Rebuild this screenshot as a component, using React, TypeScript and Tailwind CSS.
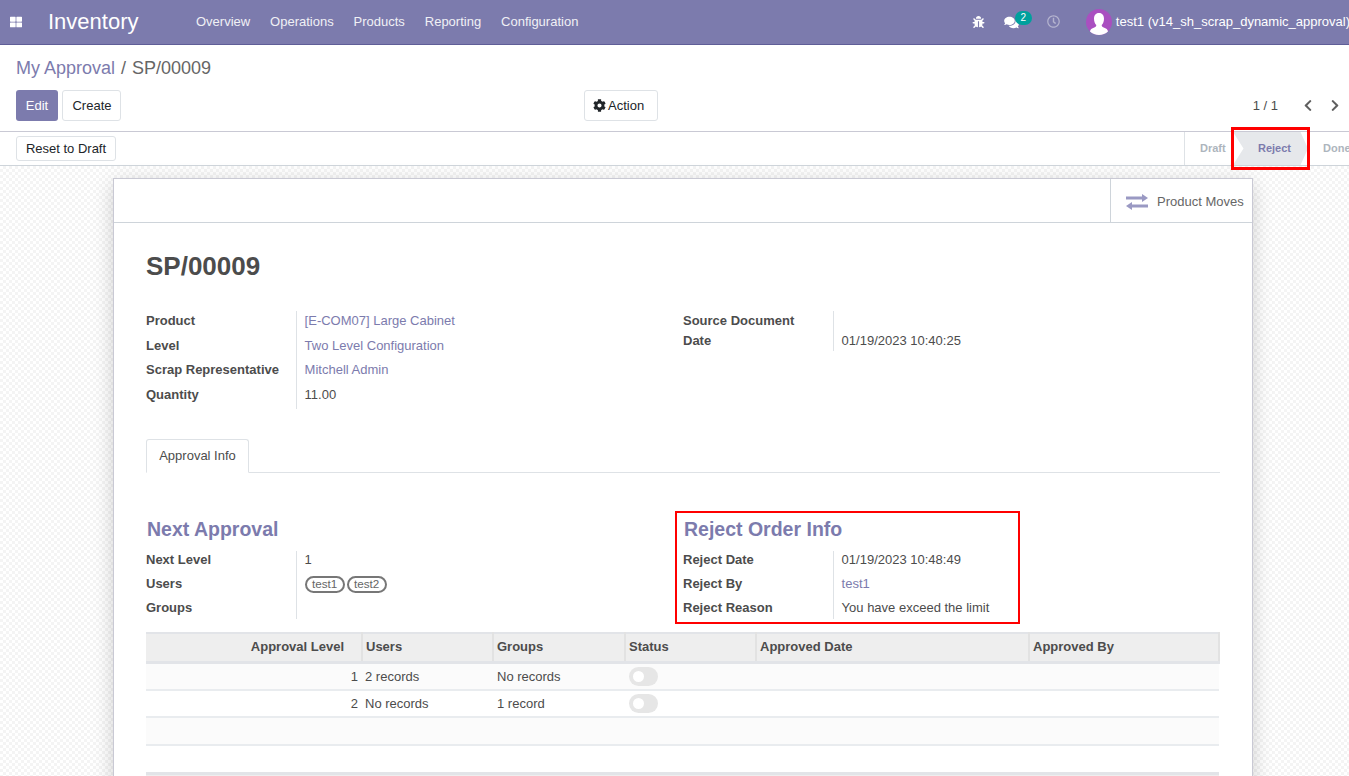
import { FaBug, FaChevronLeft, FaChevronRight, FaCog, FaComments, FaRegClock, FaThLarge } from "react-icons/fa"

const menus = ["Overview", "Operations", "Products", "Reporting", "Configuration"]

type Row = { label: string; value: React.ReactNode; link?: boolean; rowClass?: string }

function Tag({ name }: { name: string }) {
  return (
    <span className="inline-flex h-[17px] w-[40px] items-center justify-center rounded-full border-2 border-[#777] text-[11.700px] leading-none text-[#666]">
      {name}
    </span>
  )
}

function FieldGroup({ rows, rowClass }: { rows: Row[]; rowClass: string }) {
  return (
    <div className="grid w-full grid-cols-[150px_1fr]">
      {rows.map((r) => (
        <div key={r.label} className="contents">
          <div className={`${r.rowClass ?? rowClass} flex items-center font-bold text-[#4c4c4c]`}>{r.label}</div>
          <div className={`${r.rowClass ?? rowClass} flex items-center gap-[2px] border-l border-[#dee2e6] pl-[7.600px] ${r.link ? "text-[#7c7bad]" : "text-[#4c4c4c]"}`}>
            {r.value}
          </div>
        </div>
      ))}
    </div>
  )
}

function Toggle() {
  return (
    <span className="flex h-[19px] w-[29px] items-center rounded-full bg-[#e6e6e6] pl-[4px]">
      <span className="h-[11px] w-[11px] rounded-full bg-white" />
    </span>
  )
}

const th = "h-[29px] border-r-2 border-[#e2e2e2] px-[3px] pb-[2px] text-left align-middle font-bold text-[#4c4c4c]"
const td = "border-b-2 border-[#e9ecef] px-[3px] align-middle text-[#4c4c4c]"

export default function App() {
  return (
    <div className="flex h-[776px] flex-col overflow-hidden bg-white font-['Liberation_Sans',Arial,sans-serif] text-[13px] text-[#4c4c4c]">
      {/* navbar */}
      <header className="flex h-[45px] shrink-0 items-center border-b border-[#5f5e97] bg-[#7c7bad] text-white">
        <FaThLarge className="ml-[10px] h-[12px] w-[12px] shrink-0" />
        <span className="ml-[26px] w-[90px] shrink-0 text-[22px] leading-none">Inventory</span>
        <nav className="ml-[58px] flex shrink-0 gap-[19.900px] text-[#f0f0f5]">
          {menus.map((m) => (
            <span key={m}>{m}</span>
          ))}
        </nav>
        <div className="flex min-w-0 flex-1 items-center pl-[393.500px]">
          <FaBug className="h-[12px] w-[13px] shrink-0" />
          <div className="relative ml-[19px] shrink-0">
            <FaComments className="h-[13px] w-[15px]" />
            <span className="absolute -top-[5px] left-[11px] flex h-[14px] w-[17px] items-center justify-center rounded-full bg-[#00a09d] text-[10px]">
              2
            </span>
          </div>
          <FaRegClock className="ml-[28px] -mt-[2px] h-[13px] w-[13px] shrink-0 text-[#b5b4cf]" />
          <div className="ml-[26px] flex h-[26px] w-[26px] shrink-0 items-end justify-center overflow-hidden rounded-full bg-[#a94fc0]">
            <svg viewBox="0 0 26 26" className="h-[26px] w-[26px]" fill="#fff">
              <path d="M13 4c3.400 0 5 2.600 5 5.800 0 2.700-1 5-2.300 6.300 0 1.300.5 1.900 2 2.500 2.400.9 4.300 1.700 4.300 4.400V26H4v-3c0-2.700 1.900-3.500 4.300-4.400 1.500-.6 2-1.200 2-2.500C9 14.800 8 12.500 8 9.800 8 6.600 9.600 4 13 4z" />
            </svg>
          </div>
          <span className="ml-[4px] whitespace-nowrap">test1 (v14_sh_scrap_dynamic_approval)</span>
        </div>
      </header>

      {/* control panel */}
      <section className="h-[87px] shrink-0 border-b border-[#c9c9d4] px-4">
        <div className="flex h-[45px] items-center pt-[1px] text-[18px] leading-none">
          <span className="text-[#7c7bad]">My Approval</span>
          <span className="mx-[6px] text-[#666]">/</span>
          <span className="text-[#666]">SP/00009</span>
        </div>
        <div className="flex h-[31px] items-center">
          <button className="h-[31px] w-[42px] rounded-[3px] bg-[#7c7bad] text-white">Edit</button>
          <button className="ml-[4px] h-[31px] w-[59px] rounded-[3px] border border-[#dee2e6] bg-white pl-[1px] text-[#212529]">Create</button>
          <button className="ml-[463px] flex h-[31px] w-[74px] items-center gap-[2px] rounded-[3px] border border-[#dee2e6] bg-white pl-[8px] text-[#212529]">
            <FaCog className="h-[13px] w-[13px]" />
            Action
          </button>
          <span className="ml-auto mr-[-2px] text-[#4c4c4c]">1 / 1</span>
          <FaChevronLeft className="ml-[26px] h-[13px] w-[12px] text-[#5f5f5f]" />
          <FaChevronRight className="ml-[15px] mr-[-8px] h-[13px] w-[12px] text-[#5f5f5f]" />
        </div>
      </section>

      {/* status bar */}
      <section className="relative flex h-[34px] shrink-0 items-center justify-between border-b border-[#ced4da] pl-4">
        <button className="h-[25px] w-[100px] rounded-[3px] border border-[#dee2e6] bg-white text-[#212529]">Reset to Draft</button>
        <div className="flex h-[33px] w-[165px] items-stretch overflow-hidden text-[11px] font-bold text-[#adb5bd]">
          <span className="flex w-[49px] shrink-0 items-center border-l border-[#dee2e6] pl-[15px]">Draft</span>
          <span className="flex w-[75px] shrink-0 items-center bg-[#e6e8eb] pl-[25px] text-[#7c7bad] [clip-path:polygon(0_0,90%_0,100%_50%,90%_100%,0_100%,14%_50%)]">
            Reject
          </span>
          <span className="flex shrink-0 items-center pl-[15px]">Done</span>
        </div>
        <div className="absolute left-[1231px] top-[-5px] h-[43px] w-[79px] border-[3px] border-[#f00]" />
      </section>

      {/* sheet area */}
      <main className="flex-1 bg-[repeating-conic-gradient(#f4f4f4_0_25%,#ffffff_0_50%)] bg-[length:6px_6px] pt-3">
        <div className="ml-[113px] w-[1140px] border border-[#c9c9d4] bg-white shadow-[0_5px_20px_-1px_rgba(0,0,0,0.2)]">
          <div className="flex h-[44px] justify-end border-b border-[#ced4da]">
            <div className="flex w-[142px] items-center border-l border-[#ced4da] pl-[15px] text-[#666]">
              <svg viewBox="0 0 22 16" className="mt-[3px] h-[16px] w-[22px]" fill="#9a99c3">
                <path d="M0 2.500H16V0L22 4 16 8V5.500H0z" />
                <path d="M22 10.500H6V8L0 12 6 16V13.500H22z" />
              </svg>
              <span className="mt-[2px] ml-[9px]">Product Moves</span>
            </div>
          </div>

          <div className="px-8 pb-10">
            <h1 className="pt-[27px] text-[26px] leading-[33px] font-bold text-[#4c4c4c]">SP/00009</h1>

            <div className="mt-[28px] flex">
              <div className="w-[537px]">
                <FieldGroup
                  rowClass="h-[24.500px] pb-[5px]"
                  rows={[
                    { label: "Product", value: "[E-COM07] Large Cabinet", link: true },
                    { label: "Level", value: "Two Level Configuration", link: true },
                    { label: "Scrap Representative", value: "Mitchell Admin", link: true },
                    { label: "Quantity", value: "11.00" },
                  ]}
                />
              </div>
              <div className="flex-1">
                <FieldGroup
                  rowClass="h-[20px]"
                  rows={[
                    { label: "Source Document", value: "" },
                    { label: "Date", value: "01/19/2023 10:40:25" },
                  ]}
                />
              </div>
            </div>

            <div className="mt-[30px] flex h-[34px] border-b border-[#dee2e6]">
              <span className="flex h-[34px] w-[103px] items-center justify-center rounded-t-[3px] border border-b-white border-[#dee2e6] bg-white">
                Approval Info
              </span>
            </div>

            <div className="mt-[38px] flex">
              <div className="w-[529px] pt-[5px]">
                <h2 className="pl-[1px] text-[19.500px] leading-[26px] font-bold text-[#7c7bad]">Next Approval</h2>
                <div className="mt-[9px]">
                  <FieldGroup
                    rowClass="h-[24px] pb-[6px]"
                    rows={[
                      { label: "Next Level", value: "1" },
                      { label: "Users", value: (<><Tag name="test1" /><Tag name="test2" /></>) },
                      { label: "Groups", value: "", rowClass: "h-[20px] pb-[2px]" },
                    ]}
                  />
                </div>
              </div>
              <div className="h-[113px] w-[345px] border-2 border-[#f00] pl-[6px] pt-[3px]">
                <h2 className="pl-[1px] text-[19.500px] leading-[26px] font-bold text-[#7c7bad]">Reject Order Info</h2>
                <div className="mt-[9px]">
                  <FieldGroup
                    rowClass="h-[24px] pb-[6px]"
                    rows={[
                      { label: "Reject Date", value: "01/19/2023 10:48:49" },
                      { label: "Reject By", value: "test1", link: true },
                      { label: "Reject Reason", value: "You have exceed the limit", rowClass: "h-[20px] pb-[2px]" },
                    ]}
                  />
                </div>
              </div>
            </div>

            <table className="mt-[8px] w-[1074px] table-fixed border-collapse">
              <colgroup>
                <col className="w-[216px]" />
                <col className="w-[131px]" />
                <col className="w-[132px]" />
                <col className="w-[131px]" />
                <col className="w-[273px]" />
                <col />
              </colgroup>
              <thead>
                <tr className="border-t-2 border-b-[3px] border-[#e2e4e8] bg-[#eeeeee]">
                  <th className={`${th} text-right pr-[17px]`}>Approval Level</th>
                  <th className={th}>Users</th>
                  <th className={th}>Groups</th>
                  <th className={th}>Status</th>
                  <th className={th}>Approved Date</th>
                  <th className={`${th} border-r-0`}>Approved By</th>
                </tr>
              </thead>
              <tbody>
                <tr className="h-[28px] bg-[#fbfbfb]">
                  <td className={`${td} pr-[4px] text-right`}>1</td>
                  <td className={td}>2 records</td>
                  <td className={`${td} pl-[4px]`}>No records</td>
                  <td className={`${td} pl-[4px]`}><Toggle /></td>
                  <td className={td} />
                  <td className={td} />
                </tr>
                <tr className="h-[27px]">
                  <td className={`${td} pr-[4px] text-right`}>2</td>
                  <td className={td}>No records</td>
                  <td className={`${td} pl-[4px]`}>1 record</td>
                  <td className={`${td} pl-[4px]`}><Toggle /></td>
                  <td className={td} />
                  <td className={td} />
                </tr>
                <tr className="h-[28px] bg-[#fbfbfb]"><td colSpan={6} className="border-b-2 border-[#e9ecef]" /></tr>
                <tr className="h-[28px]"><td colSpan={6} /></tr>
              </tbody>
              <tfoot>
                <tr className="border-t-[3px] border-[#e2e4e8] bg-[#eeeeee]"><td colSpan={6} className="h-[28px]" /></tr>
              </tfoot>
            </table>
          </div>
        </div>
      </main>
    </div>
  )
}
